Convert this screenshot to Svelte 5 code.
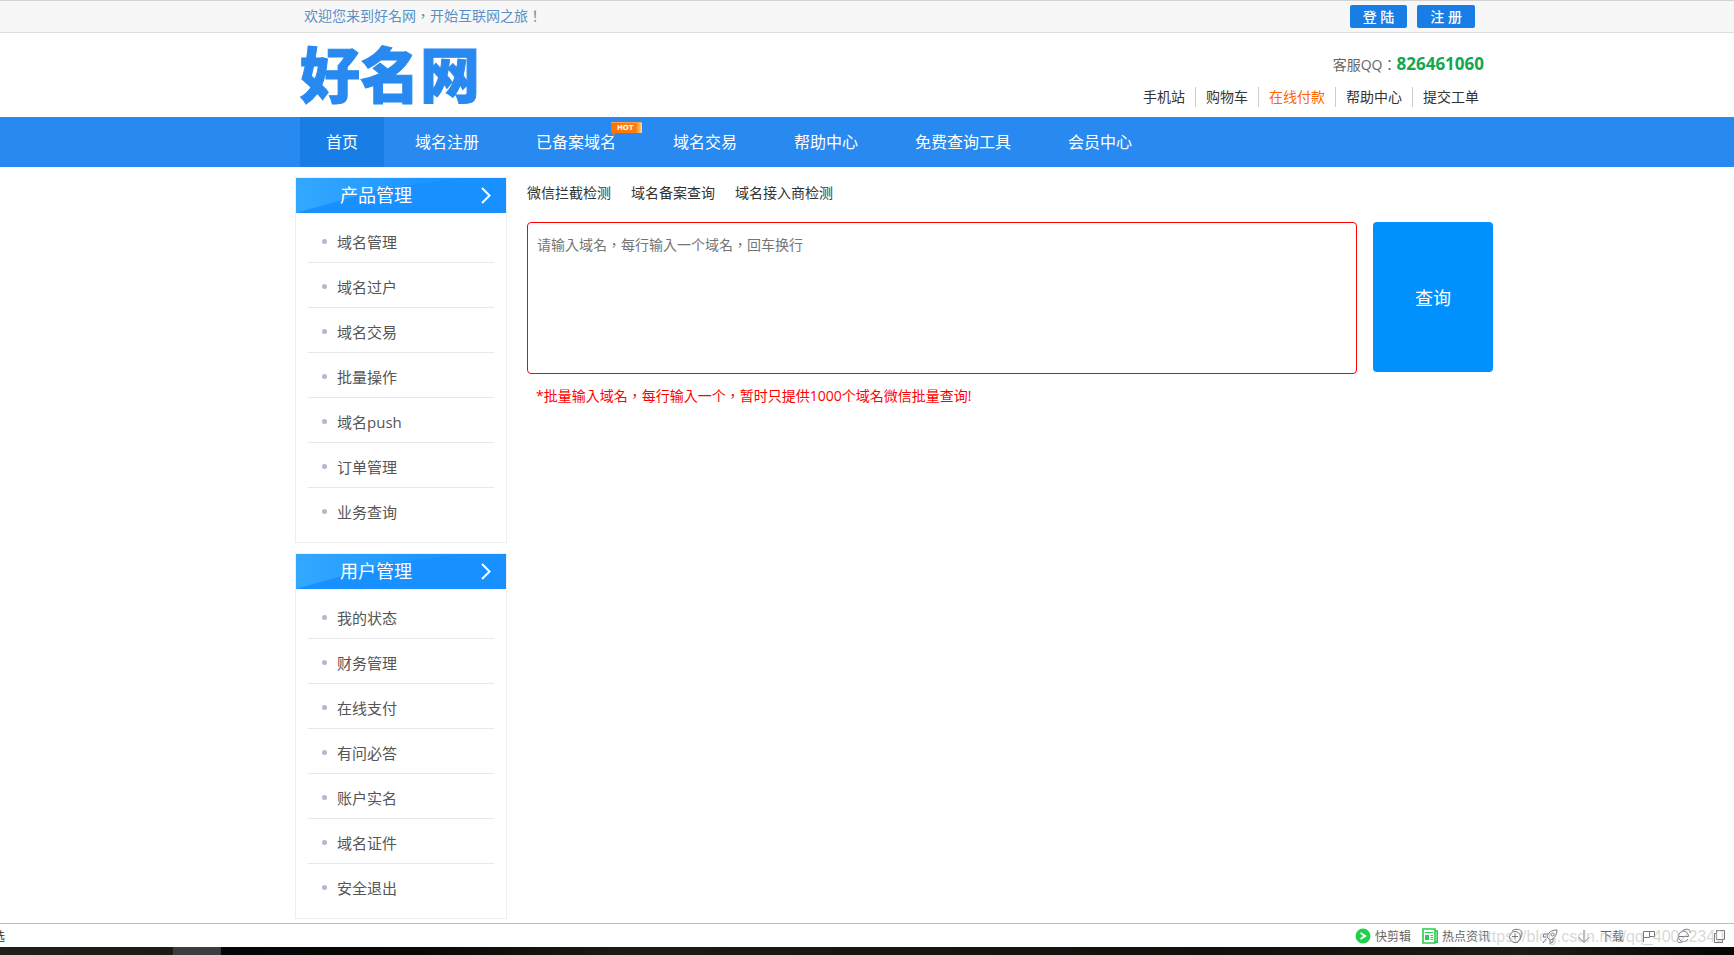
<script lang="ts">
	const quickLinks = [
		{ label: '手机站' },
		{ label: '购物车' },
		{ label: '在线付款', hot: true },
		{ label: '帮助中心' },
		{ label: '提交工单' }
	];

	const navItems = [
		{ label: '首页', active: true },
		{ label: '域名注册' },
		{ label: '已备案域名', hot: true },
		{ label: '域名交易' },
		{ label: '帮助中心' },
		{ label: '免费查询工具' },
		{ label: '会员中心' }
	];

	const panels = [
		{
			title: '产品管理',
			items: ['域名管理', '域名过户', '域名交易', '批量操作', '域名push', '订单管理', '业务查询']
		},
		{
			title: '用户管理',
			items: ['我的状态', '财务管理', '在线支付', '有问必答', '账户实名', '域名证件', '安全退出']
		}
	];

	const tools = ['微信拦截检测', '域名备案查询', '域名接入商检测'];

	let domains = $state('');
</script>

<div class="page">
	<div class="topbar">
		<div class="container topbar-inner">
			<span class="welcome">欢迎您来到好名网，开始互联网之旅！</span>
			<div class="account">
				<a href="#login">登 陆</a>
				<a href="#register">注 册</a>
			</div>
		</div>
	</div>

	<header class="container header">
		<a class="logo" href="#home">好名网</a>
		<div class="contact">
			<p class="qq">客服QQ：<strong>826461060</strong></p>
			<ul class="quick-links">
				{#each quickLinks as link}
					<li><a class:hot={link.hot} href="#link">{link.label}</a></li>
				{/each}
			</ul>
		</div>
	</header>

	<nav class="nav">
		<ul class="container nav-list">
			{#each navItems as item}
				<li class:active={item.active}>
					<a href="#nav">{item.label}</a>
					{#if item.hot}
						<svg class="hot-badge" width="32" height="14" viewBox="0 0 32 14">
							<defs>
								<linearGradient id="hot" x1="0" x2="1">
									<stop offset="0" stop-color="#ff7200" />
									<stop offset="0.8" stop-color="#ff7e0a" />
									<stop offset="1" stop-color="#ffd9a8" />
								</linearGradient>
							</defs>
							<path d="M1 0H32V11H5L4 14L2 11H1Z" fill="url(#hot)" />
							<path d="M1 .5H32" stroke="#ffa04d" />
							<text x="7" y="8">HOT</text>
						</svg>
					{/if}
				</li>
			{/each}
		</ul>
	</nav>

	<div class="container body">
		<aside class="sidebar">
			{#each panels as panel}
				<section class="panel">
					<h2>
						<span>{panel.title}</span>
						<svg width="10" height="17" viewBox="0 0 10 17" fill="none" stroke="#fff" stroke-width="2">
							<path d="M1 1L8.500 8.500L1 16" />
						</svg>
					</h2>
					<ul>
						{#each panel.items as item}
							<li><a href="#item">{item}</a></li>
						{/each}
					</ul>
				</section>
			{/each}
		</aside>

		<main class="main">
			<div class="tools">
				{#each tools as tool}
					<a href="#tool">{tool}</a>
				{/each}
			</div>
			<form class="query" onsubmit={(e) => e.preventDefault()}>
				<textarea
					bind:value={domains}
					aria-label="域名"
					placeholder="请输入域名，每行输入一个域名，回车换行"
				></textarea>
				<button type="submit">查询</button>
			</form>
			<p class="tip">*批量输入域名，每行输入一个，暂时只提供1000个域名微信批量查询!</p>
		</main>
	</div>

	<footer class="statusbar">
		<span class="clipped"><span>选</span></span>
		<div class="status-items">
			<span class="status-group">
				<span class="status-item">
					<svg width="16" height="16" viewBox="0 0 16 16">
						<circle cx="8" cy="8" r="7.500" fill="#22d04a" />
						<path d="M5.500 4L12 8L5.500 12V9.800L8.500 8L5.500 6.200Z" fill="#fff" />
					</svg>
					快剪辑
				</span>
				<span class="status-item">
					<svg width="16" height="16" viewBox="0 0 16 16" fill="none" stroke="#22d04a">
						<path d="M1 1H13V15H1Z" stroke-width="1.600" />
						<path d="M13 3H15.200V14.200H12" stroke-width="1.600" />
						<path d="M3 4.500H11M8.500 7.500H11M8.500 9.500H11M8.500 11.500H11" />
						<path d="M3 7H7V12H3Z" fill="#22d04a" stroke="none" />
					</svg>
					热点资讯
				</span>
			</span>
			<svg width="16" height="16" viewBox="0 0 16 16" fill="none" stroke="#777">
				<circle cx="7" cy="9" r="5.500" />
				<path d="M4 8.500H10M7 5.500V11.500M4 3C7 0 14 1 14 5C14 8 12 12 9 15" />
			</svg>
			<svg width="16" height="16" viewBox="0 0 16 16" fill="none" stroke="#777">
				<path d="M5 9C6 5 9 2 15 2C15 7 12 11 8 12ZM5 9L8 12M6 6H2L1 9H4M11 10V14L8 15.500V12M4 11L1 15" />
				<circle cx="10.500" cy="6.500" r="1.500" />
			</svg>
			<span class="status-item download">
				<svg width="16" height="16" viewBox="0 0 16 16" fill="none" stroke="#777">
					<path d="M8 2V14M2.500 9L8 14.500L13.500 9" />
				</svg>
				下载
			</span>
			<svg width="16" height="16" viewBox="0 0 16 16" fill="none" stroke="#777">
				<path d="M1.500 14V3.500H7.500V9.500H1.500M7.500 3.500H12.500V8.500H7.500" />
			</svg>
			<svg width="16" height="16" viewBox="0 0 16 16" fill="none" stroke="#777">
				<path d="M2.500 8.500H12.500C12.500 1.500 2.500 1.500 2.500 8.500C2.500 14.500 10 15 12 11" />
				<path d="M6 3C10 0 15 1 14 5M2 10C0 14 3 16 7 13.500" />
			</svg>
			<svg width="16" height="16" viewBox="0 0 16 16" fill="none" stroke="#777">
				<path d="M6.500 2.500H14.500V11.500H6.500ZM6 5.500H4.500V14.500H12.500V12" />
			</svg>
		</div>
		<span class="watermark">https://blog.csdn.net/qq_40022340</span>
	</footer>
	<div class="taskbar"><div class="taskbar-window"></div></div>
</div>

<style>
	:global(body) {
		background: #fff;
	}

	.page {
		font-family: 'Open Sans', 'Noto Sans CJK SC', sans-serif;
		font-size: 14px;
		color: #333;
		overflow: hidden;
	}

	ul,
	p,
	h2 {
		margin: 0;
		padding: 0;
		list-style: none;
	}

	a {
		color: inherit;
		text-decoration: none;
	}

	svg {
		display: block;
		flex: none;
	}

	.topbar,
	.nav {
		padding-left: 54px;
	}

	.container {
		max-width: 1200px;
		margin: 0 auto;
	}

	/* the TC face centres full-width punctuation in its cell */
	.welcome,
	.qq,
	.tip,
	.query textarea {
		font-family: 'Open Sans', 'Noto Sans CJK TC', sans-serif;
	}

	.topbar {
		background: #f7f7f7;
		border-top: 1px solid #d2d2d2;
		border-bottom: 1px solid #dedede;
	}

	.topbar-inner {
		display: flex;
		justify-content: space-between;
		align-items: center;
		box-sizing: border-box;
		height: 31px;
		padding: 0 19px 0 10px;
	}

	.welcome {
		line-height: 20px;
		padding-bottom: 2px;
		color: #5a8fc4;
	}

	.account {
		display: flex;
		gap: 10px;
	}

	.account a {
		padding: 0 13px;
		line-height: 23px;
		border-radius: 2px;
		background: #187de4;
		color: #fff;
		font-weight: 500;
	}

	.header {
		display: flex;
		justify-content: space-between;
		align-items: center;
		box-sizing: border-box;
		height: 84px;
		padding-left: 60px;
		max-width: 1254px;
	}

	.logo {
		padding-bottom: 6px;
		font-family: 'Noto Sans CJK SC', sans-serif;
		font-size: 60px;
		font-weight: 900;
		line-height: 78px;
		color: #288af0;
		-webkit-text-stroke: 1px #288af0;
	}

	.contact {
		display: flex;
		flex-direction: column;
		align-items: flex-end;
		gap: 10px;
		padding: 8px 5px 0 0;
	}

	.qq {
		padding-right: 5px;
		line-height: 24px;
		color: #666;
	}

	.qq strong {
		font-size: 17px;
		color: #12a750;
	}

	.quick-links {
		display: flex;
	}

	.quick-links li {
		padding: 0 10px;
		line-height: 20px;
	}

	.quick-links li + li {
		border-left: 1px solid #ccc;
	}

	.quick-links .hot {
		color: #ff6600;
	}

	.nav {
		background: #288af0;
	}

	.nav-list {
		display: flex;
		gap: 5px;
		box-sizing: border-box;
		padding-left: 6px;
	}

	.nav li {
		position: relative;
		padding: 0 26px;
		line-height: 50px;
		font-size: 16px;
		color: #fff;
	}

	.nav li.active {
		background: #187de4;
	}

	.hot-badge {
		position: absolute;
		top: 5px;
		right: 0;
	}

	.hot-badge text {
		font-family: 'DejaVu Sans', sans-serif;
		font-size: 7px;
		font-weight: 700;
		fill: #fff;
	}

	.body {
		display: flex;
		align-items: flex-start;
		gap: 20px;
		box-sizing: border-box;
		max-width: 1254px;
		padding: 10px 1px 4px 55px;
	}

	.sidebar {
		display: flex;
		flex-direction: column;
		flex: none;
		gap: 10px;
		width: 212px;
	}

	.panel {
		border: 1px solid #eee;
		padding-bottom: 9px;
	}

	.panel h2 {
		position: relative;
		display: flex;
		justify-content: space-between;
		align-items: center;
		height: 35px;
		padding: 0 15px 0 44px;
		background: #1890ff;
		color: #fff;
		font-size: 18px;
		font-weight: 400;
		line-height: 35px;
	}

	.panel h2::before {
		content: '';
		position: absolute;
		inset: 0;
		background: linear-gradient(90deg, #33a8ff, #1890ff 80%);
		clip-path: polygon(0 0, 85% 0, 72% 6%, 41% 31%, 0 100%);
	}

	.panel h2 > * {
		position: relative;
	}

	.panel ul {
		padding: 5px 12px 0;
	}

	.panel li {
		display: flex;
		align-items: center;
		gap: 10px;
		height: 42px;
		padding: 2px 0 0 14px;
		font-size: 15px;
		color: #555;
	}

	.panel li:not(:last-child) {
		border-bottom: 1px solid #e8e8e8;
	}

	.panel li:last-child {
		padding-bottom: 1px;
	}

	.panel li::before {
		content: '';
		width: 5px;
		height: 5px;
		border-radius: 50%;
		background: #b0b9d0;
	}

	.main {
		flex: 1;
		min-width: 0;
	}

	.tools {
		display: flex;
		gap: 20px;
		line-height: 32px;
	}

	.query {
		display: flex;
		align-items: flex-start;
		gap: 16px;
		margin-top: 13px;
	}

	.query textarea {
		flex: 1;
		box-sizing: border-box;
		height: 152px;
		padding: 12px 9px;
		border: 1px solid #f00;
		border-radius: 4px;
		outline: none;
		resize: none;
		font-size: 14px;
		line-height: 20px;
	}

	.query textarea::placeholder {
		color: #757575;
	}

	.query button {
		width: 120px;
		height: 150px;
		border: none;
		border-radius: 4px;
		background: #0091ff;
		color: #fff;
		font-family: inherit;
		font-size: 18px;
		cursor: pointer;
	}

	.tip {
		padding: 10px 9px;
		line-height: 24px;
		color: #f00;
	}

	.statusbar {
		position: relative;
		display: flex;
		justify-content: space-between;
		align-items: center;
		height: 23px;
		padding-right: 8px;
		border-top: 1px solid #bbb;
		font-size: 12px;
		color: #666;
	}

	.clipped {
		display: flex;
		justify-content: flex-end;
		width: 5px;
		overflow: hidden;
		color: #333;
	}

	.status-items {
		display: flex;
		align-items: center;
		gap: 18px;
	}

	.status-group {
		display: flex;
		gap: 11px;
	}

	.status-item {
		display: flex;
		align-items: center;
		gap: 4px;
	}

	.download {
		gap: 8px;
	}

	.watermark {
		position: absolute;
		right: 10px;
		top: 2px;
		font-family: 'Liberation Sans', sans-serif;
		font-size: 16px;
		line-height: 22px;
		color: rgba(190, 190, 190, 0.6);
	}

	.taskbar {
		height: 8px;
		padding-left: 10%;
		background: linear-gradient(90deg, #211f1a, #1c1a16 10%, #050505 13%, #080706 24%, #1b1a15 36%, #100f0d 70%, #1d1b17 88%, #050505);
	}

	.taskbar-window {
		width: 48px;
		height: 8px;
		background: #3d3d3d;
	}
</style>
